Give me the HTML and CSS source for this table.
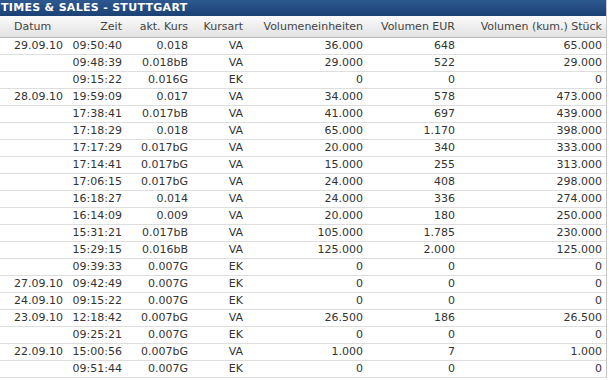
FILE: index.html
```html
<!DOCTYPE html>
<html lang="de">
<head>
  <meta charset="UTF-8" />
  <title>Times &amp; Sales - Stuttgart</title>
  <link rel="stylesheet" href="styles.css">
</head>
<body>
  <div class="box">
    <h2 class="title">TIMES &amp; SALES - STUTTGART</h2>
    <table>
      <colgroup>
        <col class="c-datum"><col class="c-zeit"><col class="c-kurs"><col class="c-art">
        <col class="c-vol"><col class="c-eur"><col class="c-kum">
      </colgroup>
      <thead>
        <tr><th class="l">Datum</th><th>Zeit</th><th>akt. Kurs</th><th>Kursart</th><th>Volumeneinheiten</th><th>Volumen EUR</th><th>Volumen (kum.) Stück</th></tr>
      </thead>
      <tbody>
        <tr><td class="l">29.09.10</td><td>09:50:40</td><td>0.018</td><td>VA</td><td>36.000</td><td>648</td><td>65.000</td></tr>
        <tr><td class="l"></td><td>09:48:39</td><td>0.018bB</td><td>VA</td><td>29.000</td><td>522</td><td>29.000</td></tr>
        <tr><td class="l"></td><td>09:15:22</td><td>0.016G</td><td>EK</td><td>0</td><td>0</td><td>0</td></tr>
        <tr><td class="l">28.09.10</td><td>19:59:09</td><td>0.017</td><td>VA</td><td>34.000</td><td>578</td><td>473.000</td></tr>
        <tr><td class="l"></td><td>17:38:41</td><td>0.017bB</td><td>VA</td><td>41.000</td><td>697</td><td>439.000</td></tr>
        <tr><td class="l"></td><td>17:18:29</td><td>0.018</td><td>VA</td><td>65.000</td><td>1.170</td><td>398.000</td></tr>
        <tr><td class="l"></td><td>17:17:29</td><td>0.017bG</td><td>VA</td><td>20.000</td><td>340</td><td>333.000</td></tr>
        <tr><td class="l"></td><td>17:14:41</td><td>0.017bG</td><td>VA</td><td>15.000</td><td>255</td><td>313.000</td></tr>
        <tr><td class="l"></td><td>17:06:15</td><td>0.017bG</td><td>VA</td><td>24.000</td><td>408</td><td>298.000</td></tr>
        <tr><td class="l"></td><td>16:18:27</td><td>0.014</td><td>VA</td><td>24.000</td><td>336</td><td>274.000</td></tr>
        <tr><td class="l"></td><td>16:14:09</td><td>0.009</td><td>VA</td><td>20.000</td><td>180</td><td>250.000</td></tr>
        <tr><td class="l"></td><td>15:31:21</td><td>0.017bB</td><td>VA</td><td>105.000</td><td>1.785</td><td>230.000</td></tr>
        <tr><td class="l"></td><td>15:29:15</td><td>0.016bB</td><td>VA</td><td>125.000</td><td>2.000</td><td>125.000</td></tr>
        <tr><td class="l"></td><td>09:39:33</td><td>0.007G</td><td>EK</td><td>0</td><td>0</td><td>0</td></tr>
        <tr><td class="l">27.09.10</td><td>09:42:49</td><td>0.007G</td><td>EK</td><td>0</td><td>0</td><td>0</td></tr>
        <tr><td class="l">24.09.10</td><td>09:15:22</td><td>0.007G</td><td>EK</td><td>0</td><td>0</td><td>0</td></tr>
        <tr><td class="l">23.09.10</td><td>12:18:42</td><td>0.007bG</td><td>VA</td><td>26.500</td><td>186</td><td>26.500</td></tr>
        <tr><td class="l"></td><td>09:25:21</td><td>0.007G</td><td>EK</td><td>0</td><td>0</td><td>0</td></tr>
        <tr><td class="l">22.09.10</td><td>15:00:56</td><td>0.007bG</td><td>VA</td><td>1.000</td><td>7</td><td>1.000</td></tr>
        <tr><td class="l"></td><td>09:51:44</td><td>0.007G</td><td>EK</td><td>0</td><td>0</td><td>0</td></tr>
      </tbody>
    </table>
  </div>
</body>
</html>
```

FILE: styles.css
```css
* { box-sizing: border-box; }
body {
  margin: 0; padding: 0;
  background: #fff;
  font-family: "DejaVu Sans", Verdana, sans-serif;
  font-size: 11px; color: #333;
}
.box {
  width: 607px;
  border-right: 1px solid #c8c8c8;
}
.title {
  margin: 0; height: 16px; padding: 0 0 0 1px;
  background: linear-gradient(#2d5890, #1c4174);
  color: #fff; font-size: 11px; font-weight: bold; line-height: 16px;
  letter-spacing: 0.3px;
  white-space: nowrap; overflow: hidden;
}
table {
  width: 606px; border-collapse: collapse; table-layout: fixed;
}
.c-datum { width: 62px; }
.c-zeit { width: 64px; }
.c-kurs { width: 66px; }
.c-art { width: 55px; }
.c-vol { width: 120px; }
.c-eur { width: 92px; }
.c-kum { width: 147px; }
th, td {
  padding: 0 4px 0 0; text-align: right; white-space: nowrap; font-weight: normal;
}
th {
  height: 21px;
  background: linear-gradient(#fbfbfb, #e2e2e2);
  border-bottom: 1px solid #b9b9b9;
  color: #444;
}
td {
  height: 17px;
  border-bottom: 1px solid #dedede;
}
th.l, td.l { text-align: left; padding: 0 0 0 14px; }
```
